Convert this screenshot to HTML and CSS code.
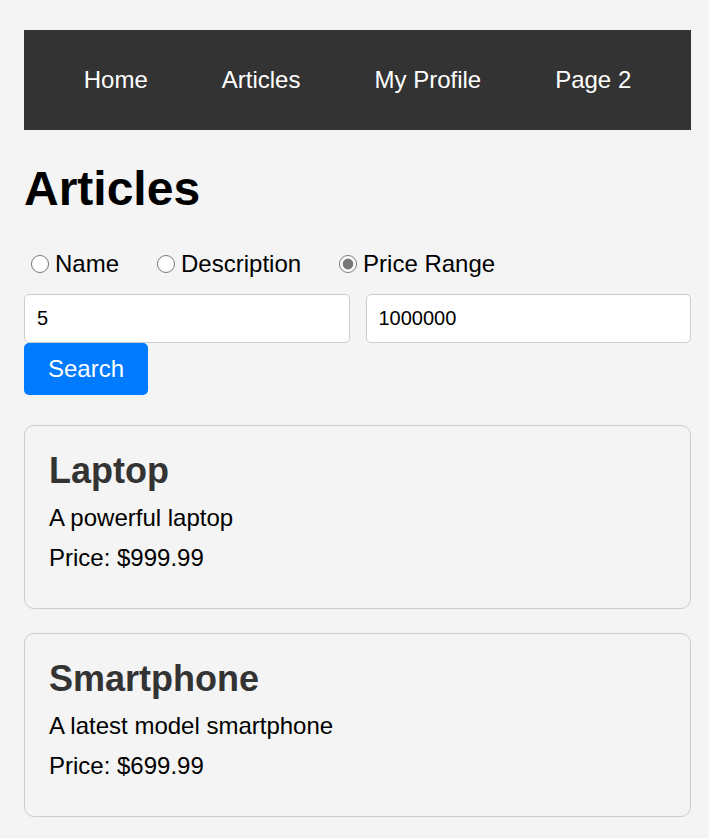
FILE: index.html
```html
<html lang="en">
<head>
    <meta charset="UTF-8">
    <meta name="viewport" content="width=device-width, initial-scale=1.0">
    <title>Articles</title>

    <link rel="stylesheet" href="styles.css">
</head>
<body>

<nav class="navbar">
    <ul>
        <li><a href="#">Home</a></li>
        <li><a href="#">Articles</a></li>
        <li><a href="#">My Profile</a></li>
        <li><a href="#">Page 2</a></li>
    </ul>
</nav>

<h1>Articles</h1>

<form class="search-form">
    <div class="radio-group">
        <label><input type="radio" name="searchBy" value="name"> Name</label>
        <label><input type="radio" name="searchBy" value="description"> Description</label>
        <label><input type="radio" name="searchBy" value="price" checked> Price Range</label>
    </div>

    <!-- Campos do filtro por preço -->
    <div class="price-fields">
        <input type="text" id="minPrice" value="5">
        <input type="text" id="maxPrice" value="1000000">
    </div>

    <button type="submit">Search</button>
</form>

<div class="articles">
    <div class="article-card">
        <h2>Laptop</h2>
        <p>A powerful laptop</p>
        <p>Price: $999.99</p>
    </div>
    <div class="article-card">
        <h2>Smartphone</h2>
        <p>A latest model smartphone</p>
        <p>Price: $699.99</p>
    </div>
</div>

</body>
</html>
```

FILE: styles.css
```css
* {
    box-sizing: border-box;
}

body {
    margin: 0;
    padding: 30px 18px 30px 24px;
    font-family: 'Liberation Sans', Arial, sans-serif;
    font-size: 24px;
    background-color: #f4f4f4;
    color: #000;
}

.navbar {
    background-color: #333;
    height: 100px;
    display: flex;
    align-items: center;
    justify-content: center;
}

.navbar ul {
    list-style: none;
    margin: 0;
    padding: 0;
    display: flex;
    gap: 74px;
}

.navbar a {
    color: #fff;
    text-decoration: none;
}

h1 {
    font-size: 48px;
    margin: 31px 0 34px;
}

.radio-group {
    display: flex;
    margin-bottom: 16px;
}

.radio-group label {
    display: flex;
    align-items: center;
    margin-right: 31px;
}

.radio-group input[type="radio"] {
    width: 18px;
    height: 18px;
    margin: 0 6px 0 7px;
    accent-color: #777;
}

.price-fields {
    display: flex;
    gap: 16px;
}

.price-fields input {
    flex: 1;
    min-width: 0;
    height: 49px;
    padding: 0 12px;
    border: 1px solid #ccc;
    border-radius: 5px;
    background-color: #fff;
    font-family: inherit;
    font-size: 20px;
    color: #000;
}

button {
    padding: 12px 24px;
    border: none;
    border-radius: 5px;
    background-color: #007bff;
    color: #fff;
    font-family: inherit;
    font-size: 24px;
    cursor: pointer;
}

button:hover {
    background-color: #0062cc;
}

.articles {
    margin-top: 30px;
}

.article-card {
    border: 1px solid #ccc;
    border-radius: 10px;
    padding: 24px;
    margin-bottom: 24px;
}

.article-card h2 {
    font-size: 36px;
    color: #333;
    margin: 0;
}

.article-card p {
    margin: 12px 0;
}
```
